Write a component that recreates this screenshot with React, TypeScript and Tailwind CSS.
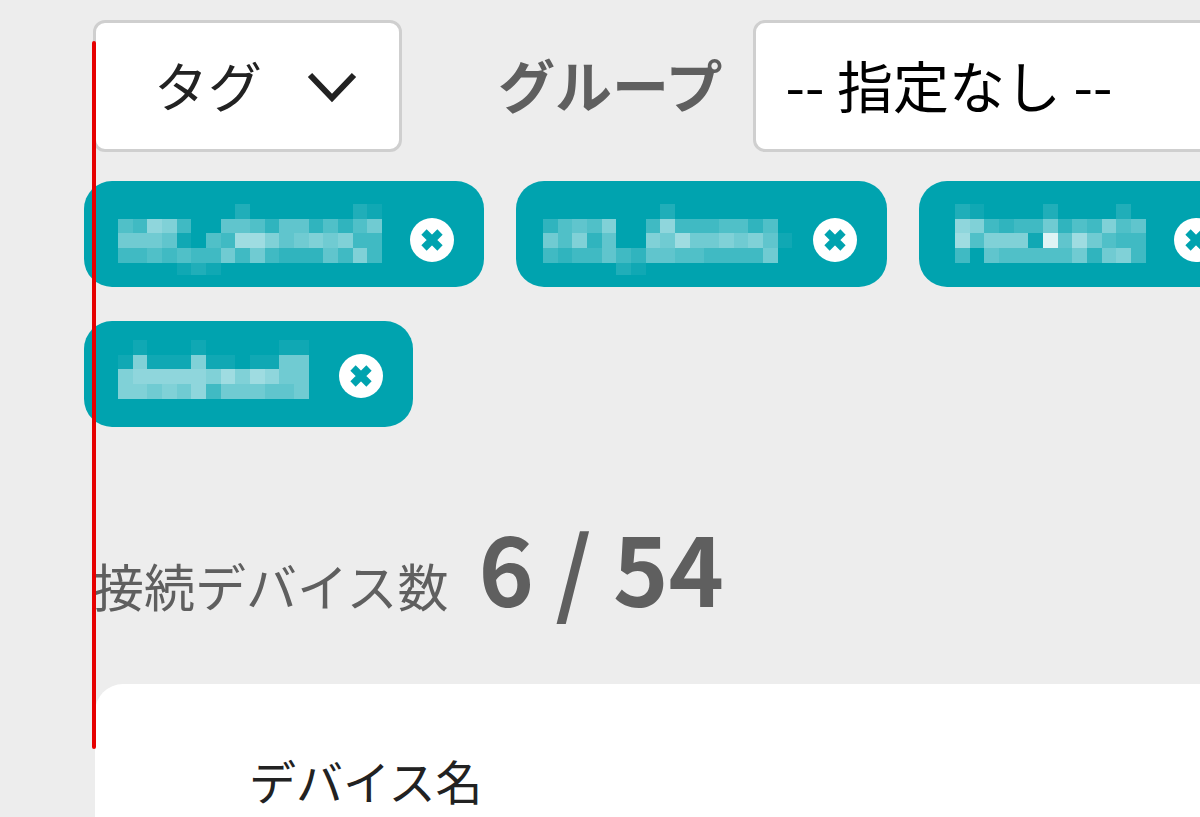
import { useState } from "react";

type Tag = {
  id: number;
  rows: string[];
  offsetX: number;
  width: string;
  align: string;
};

// Each hex digit is the strength of one mosaic cell.
const TAGS: Tag[] = [
  {
    id: 1,
    rows: [
      "000000002000000021",
      "549840066536635357",
      "77761054aa86787844",
      "445454474743336484",
      "000012100000000000",
    ],
    offsetX: 8,
    width: "w-[280px]",
    align: "pt-3",
  },
  {
    id: 2,
    rows: [
      "00000000200000000",
      "35658004944455350",
      "758360087a7787861",
      "43446436655444470",
      "00000210000000000",
    ],
    offsetX: 1,
    width: "w-[251px]",
    align: "pt-3",
  },
  {
    id: 3,
    rows: ["2100002000020", "9843447354856", "a58881e6a7544", "4065555573784"],
    offsetX: 10,
    width: "w-[209px]",
    align: "pt-3",
  },
  {
    id: 4,
    rows: ["0100010000011", "1811181101177", "8999998a8a977", "8878794777667"],
    offsetX: 8,
    width: "w-[209px]",
    align: "pt-1",
  },
];

const CELL = 44 / 3;

function Mosaic({ tag }: { tag: Tag }) {
  return (
    <svg
      className={`h-[72px] shrink-0 overflow-visible ${tag.width}`}
      shapeRendering="crispEdges"
      aria-hidden="true"
    >
      {tag.rows.flatMap((row, y) =>
        row.split("").map((digit, x) => {
          const level = parseInt(digit, 16);
          return level ? (
            <rect
              key={`${x}-${y}`}
              x={tag.offsetX + x * CELL}
              y={y * CELL}
              width={CELL}
              height={y === 4 ? 12 : CELL}
              fill="#fff"
              fillOpacity={level / 16}
            />
          ) : null;
        }),
      )}
    </svg>
  );
}

function CloseIcon() {
  return (
    <svg className="size-11" viewBox="0 0 44 44" aria-hidden="true">
      <circle cx="22" cy="22" r="22" fill="#fff" />
      <path d="M14 14L30 30M30 14L14 30" stroke="#00a3af" strokeWidth="7.5" />
    </svg>
  );
}

export default function App() {
  const [tags, setTags] = useState(TAGS);

  return (
    <main
      lang="ja"
      className="relative flex min-h-screen flex-col overflow-hidden bg-[#ededed] pt-5 pl-[93px] font-['Noto_Sans_CJK_JP',sans-serif] text-[#5f5f5f]"
    >
      <div className="flex items-center">
        <button
          type="button"
          className="flex h-[132px] shrink-0 items-center gap-[45px] rounded-xl border-3 border-[#cfcfcf] bg-white pr-[42px] pb-1 pl-[58px] text-[54px] text-[#222]"
        >
          タグ
          <svg
            className="mt-2 h-8 w-[50px]"
            viewBox="0 0 50 32"
            fill="none"
            stroke="currentColor"
            strokeWidth="6"
            aria-hidden="true"
          >
            <path d="M3 3L25 26L47 3" />
          </svg>
        </button>
        <label
          htmlFor="group"
          className="ml-24 shrink-0 pb-1 text-[57px] font-bold"
        >
          グループ
        </label>
        <select
          id="group"
          className="ml-[30px] h-[132px] w-[600px] shrink-0 appearance-none rounded-xl border-3 border-[#cfcfcf] bg-white px-[30px] pb-1 text-[56px] text-black"
        >
          <option>-- 指定なし --</option>
        </select>
      </div>

      <ul className="mt-[29px] -ml-[9px] flex w-[1280px] shrink-0 flex-wrap gap-x-8 gap-y-[34px]">
        {tags.map((tag) => (
          <li
            key={tag.id}
            className={`flex h-[106px] items-center gap-5 rounded-[28px] bg-[#00a3af] pr-[30px] pl-[26px] ${tag.align}`}
          >
            <Mosaic tag={tag} />
            <button
              type="button"
              aria-label="タグを削除"
              onClick={() => setTags(tags.filter((t) => t.id !== tag.id))}
            >
              <CloseIcon />
            </button>
          </li>
        ))}
      </ul>

      <p className="mt-[69px] flex items-baseline gap-[30px] leading-[140px]">
        <span className="text-[51px]">接続デバイス数</span>
        <strong className="text-[94px] font-bold">6 / 54</strong>
      </p>

      <section className="mt-[29px] ml-0.5 grow rounded-tl-[28px] bg-white pt-[62px] pl-[154px]">
        <table>
          <thead>
            <tr>
              <th
                scope="col"
                className="text-left text-[47px] leading-[67px] font-normal text-[#222]"
              >
                デバイス名
              </th>
            </tr>
          </thead>
        </table>
      </section>

      <div className="absolute top-[41px] left-[92px] h-[708px] w-1 rounded-full bg-[#e60000]" />
    </main>
  );
}
